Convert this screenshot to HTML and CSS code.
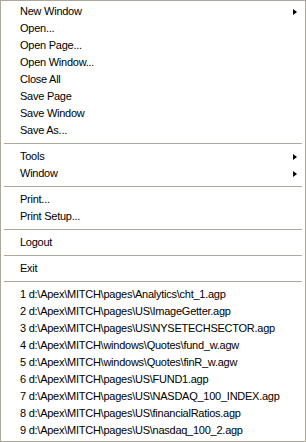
FILE: index.html
```html
<!DOCTYPE html>
<html lang="en">
<head>
<meta charset="UTF-8">
<title>File Menu</title>
<link rel="stylesheet" href="styles.css">
</head>
<body>

<!-- FILE MENU -->
<div class="menu">
  <div class="item">New Window <span class="arrow"></span></div>
  <div class="item">Open...</div>
  <div class="item">Open Page...</div>
  <div class="item">Open Window...</div>
  <div class="item">Close All</div>
  <div class="item">Save Page</div>
  <div class="item">Save Window</div>
  <div class="item">Save As...</div>
  <div class="sep"></div>
  <div class="item">Tools <span class="arrow"></span></div>
  <div class="item">Window <span class="arrow"></span></div>
  <div class="sep"></div>
  <div class="item">Print...</div>
  <div class="item">Print Setup...</div>
  <div class="sep"></div>
  <div class="item">Logout</div>
  <div class="sep"></div>
  <div class="item">Exit</div>
  <div class="sep"></div>

  <!-- RECENT FILES -->
  <div class="item">1 d:\Apex\MITCH\pages\Analytics\cht_1.agp</div>
  <div class="item">2 d:\Apex\MITCH\pages\US\ImageGetter.agp</div>
  <div class="item">3 d:\Apex\MITCH\pages\US\NYSETECHSECTOR.agp</div>
  <div class="item">4 d:\Apex\MITCH\windows\Quotes\fund_w.agw</div>
  <div class="item">5 d:\Apex\MITCH\windows\Quotes\finR_w.agw</div>
  <div class="item">6 d:\Apex\MITCH\pages\US\FUND1.agp</div>
  <div class="item">7 d:\Apex\MITCH\pages\US\NASDAQ_100_INDEX.agp</div>
  <div class="item">8 d:\Apex\MITCH\pages\US\financialRatios.agp</div>
  <div class="item">9 d:\Apex\MITCH\pages\US\nasdaq_100_2.agp</div>
</div>

</body>
</html>
```

FILE: styles.css
```css
body {
  margin: 0;
  background: #fff;
  font-family: 'Liberation Sans', Arial, sans-serif;
  font-size: 11px;
  letter-spacing: -0.25px;
  color: #000;
}
.menu {
  width: 306px;
  height: 442px;
  box-sizing: border-box;
  border: 1px solid #aca899;
  padding: 2px;
  background: #fff;
}
.item {
  height: 17px;
  line-height: 17px;
  padding: 0 6px 0 17px;
  display: flex;
  align-items: center;
  justify-content: space-between;
  white-space: nowrap;
}
.arrow {
  width: 0;
  height: 0;
  border-top: 3.5px solid transparent;
  border-bottom: 3.5px solid transparent;
  border-left: 4px solid #000;
}
.sep {
  height: 9px;
  box-sizing: border-box;
  padding: 4px 1px;
}
.sep::before {
  content: "";
  display: block;
  height: 1px;
  background: #aca899;
}
```
